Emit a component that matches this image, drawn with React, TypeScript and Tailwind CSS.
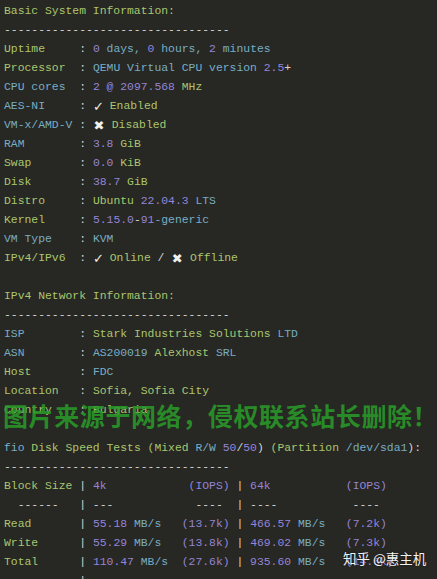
import React from "react";

type Seg = [string, keyof typeof C];

const C = {
  g: "text-[#aac66f]",
  c: "text-[#78aec4]",
  p: "text-[#9585d6]",
  w: "text-[#d6d6d2]",
  k: "inline-block w-[10px] text-center text-[13px] leading-[19px] font-bold text-[#f0f0ec] align-top [font-family:'DejaVu_Sans',sans-serif]",
  x: "inline-block w-[12px] text-center text-[13px] leading-[19px] text-[#f0f0ec] align-top [font-family:'DejaVu_Sans',sans-serif]",
};

const DASH = "---------------------------------";

const lines: Seg[][] = [
  [["Basic System Information:", "g"]],
  [[DASH, "w"]],
  [["Uptime     ", "g"], [": ", "w"], ["0", "p"], [" days, ", "c"], ["0", "p"], [" hours, ", "c"], ["2", "p"], [" minutes", "c"]],
  [["Processor  ", "g"], [": ", "w"], ["QEMU Virtual CPU version ", "c"], ["2.5", "p"], ["+", "w"]],
  [["CPU cores  ", "c"], [": ", "w"], ["2 @ 2097.568", "p"], [" MHz", "g"]],
  [["AES-NI     ", "c"], [": ", "w"], ["✓", "k"], [" ", "w"], ["Enabled", "g"]],
  [["VM-x/AMD-V ", "c"], [": ", "w"], ["✖", "x"], [" ", "w"], ["Disabled", "g"]],
  [["RAM        ", "c"], [": ", "w"], ["3.8", "p"], [" GiB", "g"]],
  [["Swap       ", "g"], [": ", "w"], ["0.0", "p"], [" KiB", "g"]],
  [["Disk       ", "g"], [": ", "w"], ["38.7", "p"], [" GiB", "g"]],
  [["Distro     ", "g"], [": ", "w"], ["Ubuntu ", "g"], ["22.04.3", "p"], [" LTS", "c"]],
  [["Kernel     ", "g"], [": ", "w"], ["5.15.0", "p"], ["-", "w"], ["91", "p"], ["-generic", "c"]],
  [["VM Type    ", "c"], [": ", "w"], ["KVM", "c"]],
  [["IPv4/IPv6  ", "g"], [": ", "w"], ["✓", "k"], [" ", "w"], ["Online", "g"], [" / ", "w"], ["✖", "x"], [" ", "w"], ["Offline", "g"]],
  [],
  [["IPv4 Network Information:", "g"]],
  [[DASH, "w"]],
  [["ISP        ", "c"], [": ", "w"], ["Stark Industries Solutions ", "g"], ["LTD", "c"]],
  [["ASN        ", "c"], [": ", "w"], ["AS200019 ", "c"], ["Alexhost ", "g"], ["SRL", "c"]],
  [["Host       ", "g"], [": ", "w"], ["FDC", "c"]],
  [["Location   ", "g"], [": ", "w"], ["Sofia, Sofia City", "g"]],
  [["Country    ", "g"], [": ", "w"], ["Bulgaria", "g"]],
  [],
  [["fio ", "c"], ["Disk Speed Tests (Mixed ", "g"], ["R/W ", "c"], ["50", "p"], ["/", "w"], ["50", "p"], [") ", "w"], ["(Partition ", "g"], ["/dev/sda1", "c"], ["):", "w"]],
  [[DASH, "w"]],
  [["Block Size ", "g"], ["| ", "w"], ["4k            (IOPS) ", "p"], ["| ", "w"], ["64k           (IOPS)", "p"]],
  [["  ------   | ---            ----  | ----           ----", "w"]],
  [["Read       ", "g"], ["| ", "w"], ["55.18", "p"], [" MB/s", "c"], ["   (13.7k) ", "p"], ["| ", "w"], ["466.57", "p"], [" MB/s", "c"], ["   (7.2k)", "p"]],
  [["Write      ", "g"], ["| ", "w"], ["55.29", "p"], [" MB/s", "c"], ["   (13.8k) ", "p"], ["| ", "w"], ["469.02", "p"], [" MB/s", "c"], ["   (7.3k)", "p"]],
  [["Total      ", "g"], ["| ", "w"], ["110.47", "p"], [" MB/s", "c"], ["  (27.6k) ", "p"], ["| ", "w"], ["935.60", "p"], [" MB/s", "c"], ["   (14.6k)", "p"]],
  [["           |", "w"]],
];

export default function App() {
  return (
    <div className="relative w-[437px] h-[579px] overflow-hidden bg-[#272723]">
      <div className="flex flex-col pl-[4px] pt-[2px] text-[11.4px] leading-[19px] whitespace-pre [font-family:'Liberation_Mono','DejaVu_Sans_Mono',monospace]">
        {lines.map((segs, i) => (
          <div key={i} className="h-[19px]">
            {segs.map(([t, k], j) => (
              <span key={j} className={C[k]}>
                {t}
              </span>
            ))}
          </div>
        ))}
      </div>
      <div className="absolute left-[3px] top-[400px] text-[25px] leading-[30px] font-bold tracking-[0.6px] text-[#2a9c2a] opacity-85 whitespace-nowrap [font-family:'Noto_Sans_CJK_SC',sans-serif]">
        图片来源于网络，侵权联系站长删除！
      </div>
      <div className="absolute left-[343px] top-[549px] text-[13.5px] leading-[18px] text-[#f2f2f2] whitespace-nowrap [text-shadow:0_0_2px_rgba(0,0,0,0.6)] [font-family:'Noto_Sans_CJK_SC',sans-serif]">
        知乎 @惠主机
      </div>
    </div>
  );
}
